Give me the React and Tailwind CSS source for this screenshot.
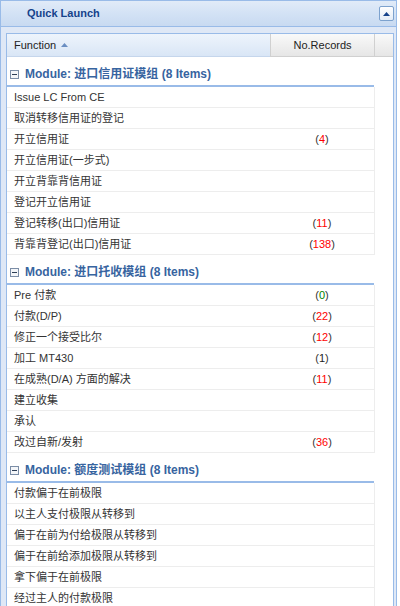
const groups = [
  {
    title: "进口信用证模组",
    rows: [
      ["Issue LC From CE"],
      ["取消转移信用证的登记"],
      ["开立信用证", 4],
      ["开立信用证(一步式)"],
      ["开立背靠背信用证"],
      ["登记开立信用证"],
      ["登记转移(出口)信用证", 11],
      ["背靠背登记(出口)信用证", 138],
    ],
  },
  {
    title: "进口托收模组",
    rows: [
      ["Pre 付款", 0],
      ["付款(D/P)", 22],
      ["修正一个接受比尔", 12],
      ["加工 MT430", 1],
      ["在成熟(D/A) 方面的解决", 11],
      ["建立收集"],
      ["承认"],
      ["改过自新/发射", 36],
    ],
  },
  {
    title: "额度测试模组",
    rows: [
      ["付款偏于在前极限"],
      ["以主人支付极限从转移到"],
      ["偏于在前为付给极限从转移到"],
      ["偏于在前给添加极限从转移到"],
      ["拿下偏于在前极限"],
      ["经过主人的付款极限"],
    ],
  },
];

const countColor = (n) => (n === 0 ? "text-[#008000]" : n === 1 ? "text-[#222]" : "text-[#ff0000]");

function MinusBox() {
  return (
    <svg width="9" height="9" viewBox="0 0 9 9" className="shrink-0">
      <rect x="0.5" y="0.5" width="8" height="8" fill="#f4f6f9" stroke="#7b8da6" />
      <line x1="2" y1="4.5" x2="7" y2="4.5" stroke="#2d3e55" strokeWidth="1" />
    </svg>
  );
}

function Group({ title, rows }) {
  return (
    <div>
      <div className="w-[367px] h-[30px] pt-[10px] pl-[3px] flex items-start gap-[6px] border-b-2 border-[#99bbe8]">
        <span className="mt-[3px]"><MinusBox /></span>
        <span className="text-[12px] leading-[14px] font-bold text-[#3764a0]">
          Module: {title} (8 Items)
        </span>
      </div>
      {rows.map(([label, n]) => (
        <div key={label} className="w-[368px] h-[21px] flex items-center border-b border-r border-[#ededed] text-[11px] text-[#333]">
          <div className="w-[263px] pl-[7px] truncate">{label}</div>
          <div className="w-[104px] text-center">
            {n !== undefined && (
              <span>(<span className={countColor(n)}>{n}</span>)</span>
            )}
          </div>
        </div>
      ))}
    </div>
  );
}

export default function App() {
  return (
    <div className="w-[400px] h-[606px] bg-white overflow-hidden" style={{ fontFamily: '"Liberation Sans", Arial, "Noto Sans CJK SC", sans-serif' }}>
      <div className="w-[397px] h-[620px] border border-[#99bbe8] flex flex-col">
        <div className="h-[26px] shrink-0 flex items-center justify-between pl-[26px] pr-[2px] border-b border-[#99bbe8] bg-gradient-to-b from-[#e1ebf8] via-[#d3e2f5] to-[#c8daf1]">
          <span className="text-[11px] font-bold text-[#15428b]">Quick Launch</span>
          <div className="w-[15px] h-[15px] rounded-[2px] border border-[#7da2ce] bg-gradient-to-b from-white to-[#e4ecf7] flex items-center justify-center">
            <svg width="7" height="4" viewBox="0 0 7 4"><path d="M0 4 L3.5 0 L7 4 Z" fill="#15428b" /></svg>
          </div>
        </div>
        <div className="flex-1 bg-[#dfe8f6] pl-[5px] pr-[2px] pt-[6px]">
          <div className="h-full border border-[#99bbe8] bg-white">
            <div className="h-[23px] flex text-[11px] text-[#222]">
              <div className="w-[263px] flex items-center gap-[5px] pl-[7px] bg-gradient-to-b from-[#eef4fc] to-[#d9e6f6] border-b border-[#c5d6ec]">
                <span>Function</span>
                <svg width="7" height="4" viewBox="0 0 7 4"><path d="M0 4 L3.5 0 L7 4 Z" fill="#6a8ec2" /></svg>
              </div>
              <div className="w-[104px] flex items-center justify-center border-l border-[#d0d0d0] bg-gradient-to-b from-[#f9f9f9] to-[#e6e6e6] border-b border-b-[#d0d0d0]">
                No.Records
              </div>
              <div className="flex-1 border-l border-[#d0d0d0] bg-gradient-to-b from-[#f9f9f9] to-[#e6e6e6] border-b border-b-[#d0d0d0]" />
            </div>
            {groups.map((g) => (
              <Group key={g.title} {...g} />
            ))}
          </div>
        </div>
      </div>
    </div>
  );
}
